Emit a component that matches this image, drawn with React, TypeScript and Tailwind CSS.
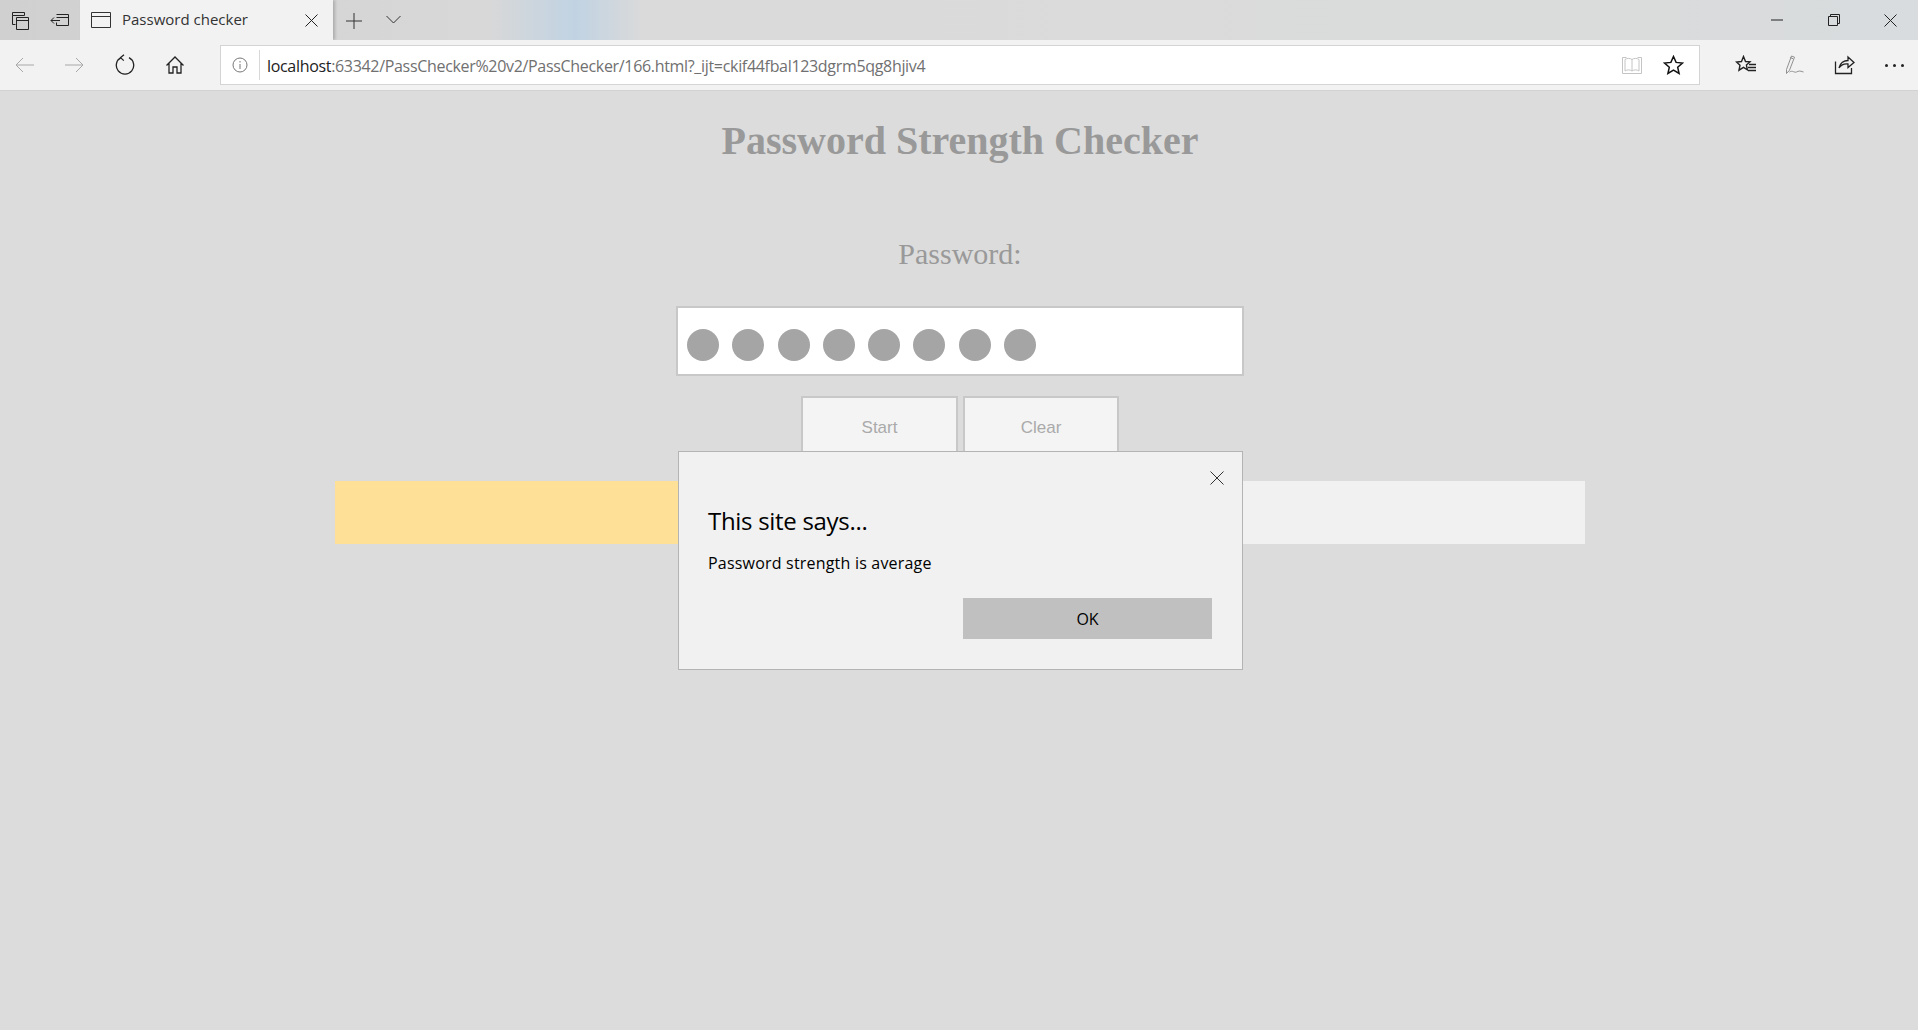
import React from "react";

const Ico = ({ w, h, cls = "", vb, children }: { w: number; h: number; cls?: string; vb?: string; children: React.ReactNode }) => (
  <svg width={w} height={h} viewBox={vb ?? `0 0 ${w} ${h}`} fill="none" stroke="currentColor" strokeWidth="1" className={`shrink-0 ${cls}`}>
    {children}
  </svg>
);

const chrome = { fontFamily: '"Open Sans","Noto Sans",sans-serif' };

export default function App() {
  return (
    <div className="min-h-[1030px] h-[1030px] overflow-hidden bg-[#dcdcdc] relative flex flex-col">
      {/* title bar */}
      <div
        className="h-10 shrink-0 flex items-center bg-[linear-gradient(90deg,#d0d0d0_0%,#d8d8d8_25.500%,#c1d3e3_30%,#dadada_33.500%,#dadbdb_85%,#d8dcde_100%)] text-[#222]"
        style={chrome}
      >
        <div className="w-20 h-full flex items-center shrink-0">
          <Ico w={19} h={19} cls="ml-[11px]">
            <path d="M1.500 1.500h12v3h-12zM1.500 4.500v9h3M5.500 6.500h12v12h-12zM5.500 9.500h12" />
          </Ico>
          <Ico w={20} h={14} cls="ml-[20px]">
            <path d="M6.500 1.500h12v11h-12v-3M6.500 4.500h12M1 7.500h9M4 4.500l-3 3 3 3" />
          </Ico>
        </div>
        <div className="w-[253px] h-full shrink-0 bg-[#f2f2f2] flex items-center shadow-[2px_0_3px_rgba(0,0,0,0.2)]">
          <Ico w={20} h={16} cls="ml-[11px] text-[#333]">
            <path d="M.5.500h19v15H.5zM.5 4.500h19" />
          </Ico>
          <span className="ml-[11px] -mt-0.5 text-[15px] leading-5 text-[#333] whitespace-nowrap">Password checker</span>
          <Ico w={13} h={13} cls="ml-auto mr-[15px] text-[#222]">
            <path d="M.5.500l12 12M12.500.500l-12 12" />
          </Ico>
        </div>
        <Ico w={18} h={18} cls="ml-[12px] mt-0.5 text-[#333]">
          <path d="M9 1v16M1 9h16" />
        </Ico>
        <Ico w={15} h={9} cls="ml-[23px] -mt-px text-[#333]">
          <path d="M.5 1l7 7 7-7" />
        </Ico>
        <div className="ml-auto flex items-center">
          <Ico w={12} h={2} cls="mr-[45px]">
            <path d="M0 1h12" />
          </Ico>
          <Ico w={12} h={12} cls="mr-[44px]">
            <path d="M.5 2.500h9v9h-9zM2.500 2.500v-2h9v9h-2" />
          </Ico>
          <Ico w={13} h={13} cls="mr-[21px]">
            <path d="M.5.500l12 12M12.500.500l-12 12" />
          </Ico>
        </div>
      </div>

      {/* toolbar */}
      <div className="h-[51px] shrink-0 bg-[#f2f2f2] border-b border-[#d2d2d2] flex items-center text-[#222]" style={chrome}>
        <Ico w={19} h={16} cls="ml-[15px] text-[#a8a8a8]">
          <path d="M19 8H1M8 1L1 8l7 7" />
        </Ico>
        <Ico w={19} h={16} cls="ml-[31px] text-[#a8a8a8]">
          <path d="M0 8h18M11 1l7 7-7 7" />
        </Ico>
        <Ico w={20} h={22} cls="ml-[31px]" vb="0 0 20 22">
          <path d="M6 3.600A8.700 8.700 0 1 0 14 3.600M9 .8L5.600 3.600l3.200 3" strokeWidth="1.300" />
        </Ico>
        <Ico w={18} h={18} cls="ml-[31px]">
          <path d="M.5 9.500L9 1l8.500 8.500M3 7.500v9.500h4v-6h4v6h4V7.500" strokeWidth="1.300" />
        </Ico>
        <div className="ml-9 w-[1480px] h-10 shrink-0 bg-white border border-[#d4d4d4] flex items-center">
          <Ico w={16} h={16} cls="ml-[11px] text-[#777]">
            <circle cx="8" cy="8" r="7" />
            <path d="M8 7v5M8 4v1.500" />
          </Ico>
          <div className="ml-[11px] w-px h-[30px] bg-[#d8d8d8]" />
          <div className="ml-[7px] mt-0.5 text-base text-[#707070] whitespace-nowrap tracking-[-0.32px]">
            <span className="text-[#222]">localhost</span>:63342/PassChecker%20v2/PassChecker/166.html?_ijt=ckif44fbal123dgrm5qg8hjiv4
          </div>
          <div className="ml-auto flex items-center">
            <Ico w={20} h={18} cls="mr-[21px] text-[#c4c4c4]">
              <path d="M.5 1.500h4M15.500 1.500h4M.5 1.500v16h19v-16M3 3.500c2-1.500 5-1.500 7 0 2-1.500 5-1.500 7 0V15c-2-1.500-5-1.500-7 0-2-1.500-5-1.500-7 0zM10 3.500V15" />
            </Ico>
            <Ico w={21} h={20} cls="mr-[15px] text-[#111]" vb="0 0 21 20">
              <path d="M10.500 1.500l2.600 5.900 6.400.6-4.800 4.300 1.400 6.200-5.600-3.300-5.600 3.300 1.400-6.200L1.500 8l6.400-.6z" strokeWidth="1.500" />
            </Ico>
          </div>
        </div>
        <Ico w={22} h={20} cls="ml-[35px]" vb="0 0 22 20">
          <path d="M8.500 1.500l2 5 4.500.4-3.600 3.200 1 4.700-3.900-2.400-4.500 2.800 1-5L1.500 7l5-.5z" strokeWidth="1.400" />
          <path d="M14 9.500h7M13 12.500h8M13 15.500h8" strokeWidth="1.400" />
        </Ico>
        <Ico w={20} h={20} cls="ml-[28px] text-[#909090]" vb="0 0 20 20">
          <path d="M1.500 14.500L6.500 1l3 1.200-5 13-3 3.300zM5 2.500l3 1.200M4.500 17c3-2 5 1 7 0s3-1.500 7 0" />
        </Ico>
        <Ico w={21} h={20} cls="ml-[29px]" vb="0 0 21 20">
          <path d="M1.500 6.500v12h16V13M5 13c1-5 5-7.500 9-7.500V2l6 5.500-6 5V9c-4-.5-7 1-9 4z" strokeWidth="1.300" />
        </Ico>
        <div className="ml-[30px] flex gap-[5px]">
          <span className="w-[3px] h-[3px] rounded-full bg-[#222]" />
          <span className="w-[3px] h-[3px] rounded-full bg-[#222]" />
          <span className="w-[3px] h-[3px] rounded-full bg-[#222]" />
        </div>
      </div>

      {/* page */}
      <div className="flex flex-col items-center grow pl-0.5" style={{ fontFamily: '"Liberation Serif",serif' }}>
        <h1 className="mt-[27px] text-[40px] leading-[46px] font-bold text-[#999]">Password Strength Checker</h1>
        <div className="mt-[71px] text-[30px] leading-[37px] text-[#999]">Password:</div>
        <div className="mt-[34px] w-[568px] h-[70px] bg-white border-2 border-[#c8c8c8] pl-[9px] pt-[21px] flex gap-[13.3px]">
          {[0, 1, 2, 3, 4, 5, 6, 7].map((i) => (
            <span key={i} className="w-8 h-8 rounded-full bg-[#a5a5a5]" />
          ))}
        </div>
        <div className="mt-[20px] flex gap-[5px]" style={{ fontFamily: '"Liberation Sans",sans-serif' }}>
          <button className="w-[157px] h-[68px] border-2 border-[#c8c8c8] bg-[#f4f4f4] text-[17px] text-[#aaa] pb-1">Start</button>
          <button className="w-[156px] h-[68px] border-2 border-[#c8c8c8] bg-[#f4f4f4] text-[17px] text-[#aaa] pb-1">Clear</button>
        </div>
        <div className="mt-[17px] w-[1250px] h-[63px] bg-[#f1f1f1]">
          <div className="w-1/2 h-full bg-[#fee097]" />
        </div>
      </div>

      {/* dialog */}
      <div
        className="absolute left-[678px] top-[451px] w-[565px] h-[219px] bg-[#f1f1f1] border border-[#b4b4b4] text-black"
        style={chrome}
      >
        <Ico w={14} h={14} cls="absolute right-[18px] top-[19px] text-[#333]">
          <path d="M.5.500l13 13M13.500.500l-13 13" />
        </Ico>
        <div className="absolute left-[29px] top-[53px] text-[24px] leading-8 tracking-[-0.3px] whitespace-nowrap">This site says...</div>
        <div className="absolute left-[29px] top-[99px] text-[16px] leading-6 tracking-[0.2px] whitespace-nowrap">Password strength is average</div>
        <button className="absolute left-[284px] top-[146px] w-[249px] h-[41px] bg-[#c0c0c0] text-base">OK</button>
      </div>
    </div>
  );
}
